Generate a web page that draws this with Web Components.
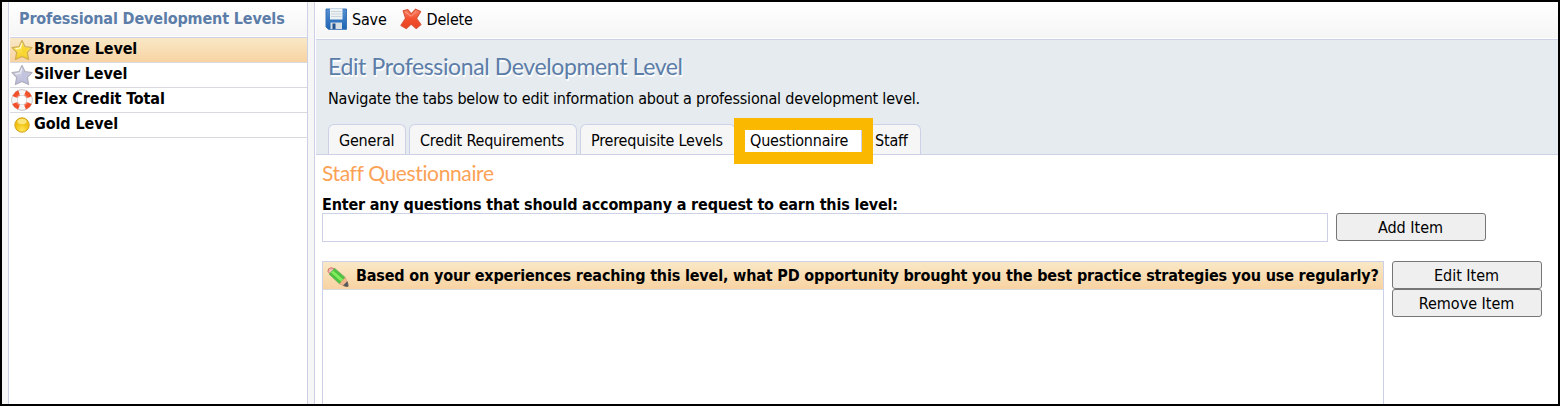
<!DOCTYPE html>
<html lang="en">
<head>
<meta charset="utf-8">
<title>Professional Development Levels</title>
<style>
  html, body {
    margin: 0;
    height: 406px;
    overflow: hidden;
  }

  body {
    font: 16px/20px Tahoma, "DejaVu Sans Condensed", "DejaVu Sans", sans-serif;
    color: #000;
    --line: #cdd1e8;
    --selected: linear-gradient(#f9e8c6, #f8d3a2);
    --bar: linear-gradient(#fff, #f5f5f5);
  }
</style>
</head>
<body>
<app-frame>
  <level-list slot="side" heading="Professional Development Levels">
    <level-item icon="gold-star" selected>Bronze Level</level-item>
    <level-item icon="silver-star">Silver Level</level-item>
    <level-item icon="ring">Flex Credit Total</level-item>
    <level-item icon="coin">Gold Level</level-item>
  </level-list>
  <tool-bar>
    <tool-button icon="save">Save</tool-button>
    <tool-button icon="delete">Delete</tool-button>
  </tool-bar>
  <page-header heading="Edit Professional Development Level">
    <span>Navigate the tabs below to edit information about a professional development level.</span>
    <page-tab slot="tabs" style="width:78px">General</page-tab>
    <page-tab slot="tabs" style="width:168px">Credit Requirements</page-tab>
    <page-tab slot="tabs" style="width:156px">Prerequisite Levels</page-tab>
    <page-tab slot="tabs" style="width:123px" active>Questionnaire</page-tab>
    <page-tab slot="tabs" style="width:57px;margin-left:-1px">Staff</page-tab>
  </page-header>
  <question-form></question-form>
</app-frame>

<script>
const icons = {
  'gold-star': `
    <svg width="22" height="22" viewBox="0 0 22 22">
      <defs><linearGradient id="g" x2="0" y2="1"><stop offset="0" stop-color="#fff2a0"/><stop offset=".5" stop-color="#fbe04a"/><stop offset="1" stop-color="#f5c81c"/></linearGradient></defs>
      <path d="M11 1.500l3 6.200 7 .9-4.700 4.800 1.300 7.100-6.600-3-6.600 3 1.300-7.100L1 8.600l7-.9z" fill="url(#g)" stroke="#cfae55" stroke-width="1.300" stroke-linejoin="round"/>
      <path d="M11 4l2.200 4.600 5 .8-3.500 3.300.9 5-4.600-2.200z" fill="#f9d632"/>
      <path d="M11 4.500L9 9l-4.500.8" fill="none" stroke="#fffbd0" stroke-width="1.200"/>
    </svg>`,
  'silver-star': `
    <svg width="22" height="22" viewBox="0 0 22 22">
      <defs><linearGradient id="g" x2="0" y2="1"><stop offset="0" stop-color="#dedee8"/><stop offset=".5" stop-color="#cbccde"/><stop offset="1" stop-color="#b5b7da"/></linearGradient></defs>
      <path d="M11 1.500l3 6.200 7 .9-4.700 4.800 1.300 7.100-6.600-3-6.600 3 1.300-7.100L1 8.600l7-.9z" fill="url(#g)" stroke="#b0b0be" stroke-width="1.300" stroke-linejoin="round"/>
      <path d="M11 4l2.200 4.600 5 .8-3.500 3.300.9 5-4.600-2.200z" fill="#c1c3df"/>
      <path d="M11 4.500L9 9l-4.500.8" fill="none" stroke="#efeff6" stroke-width="1.200"/>
    </svg>`,
  'ring': `
    <svg width="22" height="22" viewBox="0 0 22 22">
      <circle cx="11" cy="11" r="7.600" fill="none" stroke="#bdbdbd" stroke-width="6.200"/>
      <circle cx="11" cy="11" r="7.500" fill="none" stroke="#f4f4f4" stroke-width="5.200"/>
      <circle cx="11" cy="11" r="7.800" fill="none" stroke="#f2502b" stroke-width="5.200" stroke-dasharray="6.130 6.122" transform="rotate(22 11 11)"/>
      <circle cx="11" cy="11" r="6" fill="none" stroke="#fff" stroke-opacity=".3" stroke-width="1"/>
    </svg>`,
  'coin': `
    <svg width="22" height="22" viewBox="0 0 22 22">
      <defs><radialGradient id="g" cx=".5" cy=".85" r=".8"><stop offset="0" stop-color="#ffe65a"/><stop offset=".55" stop-color="#f3c416"/><stop offset="1" stop-color="#e8b80c"/></radialGradient></defs>
      <circle cx="11" cy="11" r="7.200" fill="url(#g)" stroke="#d6a41a" stroke-width="1"/>
      <ellipse cx="11" cy="7.500" rx="4.600" ry="2.700" fill="#fff3a0" opacity=".75"/>
    </svg>`,
  'save': `
    <svg width="22" height="22" viewBox="0 0 22 22">
      <defs><linearGradient id="g" x2="0" y2="1"><stop offset="0" stop-color="#5590d0"/><stop offset="1" stop-color="#1c62b4"/></linearGradient></defs>
      <path d="M1 1h20.500v20.300H3.500L1 19z" fill="url(#g)" stroke="#3a74b8" stroke-width="1" stroke-linejoin="round"/>
      <path d="M5 .500h12.500v11H5z" fill="#edf2f5"/>
      <path d="M6 3.500h10.500M6 6h10.500M6 8.500h10.500" stroke="#cbd5dc" stroke-width="1"/>
      <path d="M5.500 14.500h11.500v6.500H5.500z" fill="#d9dee2"/>
      <path d="M7.500 15.500h3v5.500h-3z" fill="#23548f"/>
    </svg>`,
  'delete': `
    <svg width="22" height="22" viewBox="0 0 22 22">
      <defs><linearGradient id="g" x2="0" y2="1"><stop offset="0" stop-color="#f98468"/><stop offset=".5" stop-color="#f4502e"/><stop offset="1" stop-color="#e8421f"/></linearGradient></defs>
      <path d="M3.200 2.800L7.800 1.700l3.500 4.100L15.600 1.200l5 2.400-4.200 6.800 4.500 6.200-4.700 3.900-5-4.500-5 4.600L1 17.400l4.600-7z" fill="url(#g)" stroke="#dc5538" stroke-width="1.200" stroke-linejoin="round"/>
      <path d="M5 3.800l6.200 4.500 5-5" fill="none" stroke="#fba48e" stroke-width="1"/>
    </svg>`,
  'pencil': `
    <svg width="22" height="22" viewBox="0 0 22 22">
      <path d="M3.500 8.500Q-.5 5 1.500 3 3.800.300 8 3.300z" fill="#ecc0b4" stroke="#d66a5e" stroke-width="1" stroke-linejoin="round"/>
      <path d="M2.200 8.200L7.600 2.300l10.600 9.200-5.600 6.400z" fill="#4fc23f" stroke="#6db063" stroke-width=".8"/>
      <path d="M5 5.500l10.800 9.700" stroke="#80ec5e" stroke-width="3"/>
      <path d="M12.600 17.900l5.600-6.400q2.500 4 2.800 8.700-4.500 0-8.400-2.300z" fill="#f2b88c" stroke="#d59a78" stroke-width=".6"/>
      <path d="M16.500 19.400l3.700-3.700q1 2.300.8 4.700-2.500.2-4.500-1z" fill="#555" stroke="#666" stroke-width="1" stroke-linejoin="round"/>
    </svg>`
};

class AppFrame extends HTMLElement {
  constructor() {
    super();
    this.attachShadow({ mode: 'open' });
    this.shadowRoot.innerHTML = `
      <style>
        :host {
          display: grid;
          grid-template-columns: 300px 1fr;
          gap: 6px;
          box-sizing: border-box;
          width: 1560px;
          height: 406px;
          padding-left: 6px;
          border: 2px solid #000;
          background: #f6f6f6;
          overflow: hidden;
        }

        aside, main {
          box-sizing: border-box;
          min-width: 0;
          padding-left: 1px;
          border-left: 1px solid var(--line);
          background: #fff;
        }

        aside {
          border-right: 1px solid var(--line);
        }
      </style>
      <aside><slot name="side"></slot></aside>
      <main><slot></slot></main>
    `;
  }
}

class LevelList extends HTMLElement {
  constructor() {
    super();
    this.attachShadow({ mode: 'open' });
    this.shadowRoot.innerHTML = `
      <style>
        :host {
          display: block;
        }

        h3 {
          box-sizing: border-box;
          height: 36px;
          margin: 0;
          padding: 7px 0 0 9px;
          border-bottom: 1px solid var(--line);
          background: var(--bar);
          box-shadow: inset 0 -1px #fff;
          color: #5c7da8;
          font-size: 16px;
          letter-spacing: -0.14px;
          line-height: 20px;
          white-space: nowrap;
        }
      </style>
      <h3>${this.getAttribute('heading')}</h3>
      <slot></slot>
    `;
  }
}

class LevelItem extends HTMLElement {
  constructor() {
    super();
    this.attachShadow({ mode: 'open' });
    this.shadowRoot.innerHTML = `
      <style>
        :host {
          display: flex;
          gap: 1px;
          box-sizing: border-box;
          height: 25px;
          padding-left: 1px;
          border-bottom: 1px solid #d9d9e0;
          font-weight: bold;
          letter-spacing: -0.1px;
          line-height: 22px;
        }

        :host([selected]) {
          background: var(--selected);
        }

        svg {
          flex: none;
          margin-top: 1px;
        }
      </style>
      ${icons[this.getAttribute('icon')]}
      <slot></slot>
    `;
  }
}

class ToolBar extends HTMLElement {
  constructor() {
    super();
    this.attachShadow({ mode: 'open' });
    this.shadowRoot.innerHTML = `
      <style>
        :host {
          display: flex;
          gap: 13px;
          box-sizing: border-box;
          height: 38px;
          padding: 6px 0 0 9px;
          border-bottom: 1px solid var(--line);
          background: var(--bar);
          box-shadow: inset 0 -1px #fff;
        }
      </style>
      <slot></slot>
    `;
  }
}

class ToolButton extends HTMLElement {
  constructor() {
    super();
    this.attachShadow({ mode: 'open' });
    this.shadowRoot.innerHTML = `
      <style>
        :host {
          display: flex;
          gap: 5px;
          height: 22px;
          letter-spacing: -0.2px;
          line-height: 23px;
        }
      </style>
      ${icons[this.getAttribute('icon')]}
      <slot></slot>
    `;
  }
}

class PageHeader extends HTMLElement {
  constructor() {
    super();
    this.attachShadow({ mode: 'open' });
    this.shadowRoot.innerHTML = `
      <style>
        :host {
          display: flex;
          flex-direction: column;
          box-sizing: border-box;
          height: 115px;
          padding: 12px 0 0 12px;
          border-bottom: 1px solid var(--line);
          background: #e5ebef;
          letter-spacing: -0.2px;
          white-space: nowrap;
        }

        h1 {
          margin: 0;
          color: #5c7da8;
          font: 23px/28px "Gill Sans", Lato, sans-serif;
          letter-spacing: -0.37px;
          text-shadow: 1px 2px #fff;
        }

        p {
          margin: 9px 0 0;
          line-height: 20px;
        }

        nav {
          display: flex;
          gap: 3px;
          margin-top: 15px;
        }
      </style>
      <h1>${this.getAttribute('heading')}</h1>
      <p><slot></slot></p>
      <nav><slot name="tabs"></slot></nav>
    `;
  }
}

class PageTab extends HTMLElement {
  constructor() {
    super();
    this.attachShadow({ mode: 'open' });
    this.shadowRoot.innerHTML = `
      <style>
        :host {
          display: block;
          position: relative;
          box-sizing: border-box;
          height: 30px;
          padding: 6px 0 0 10px;
          border: 1px solid var(--line);
          border-bottom: 0;
          border-radius: 6px 6px 0 0;
          background: #f6f6f6;
        }

        :host([active]) {
          height: 31px;
          margin-bottom: -1px;
          background: #fff;
        }

        /* callout frame over the active tab */
        :host([active])::after {
          content: "";
          position: absolute;
          z-index: 1;
          left: -6px;
          top: -7px;
          width: 117px;
          height: 22px;
          border: solid #fbb800;
          border-width: 12px 11px;
        }
      </style>
      <slot></slot>
    `;
  }
}

class PushButton extends HTMLElement {
  constructor() {
    super();
    this.attachShadow({ mode: 'open' });
    this.shadowRoot.innerHTML = `
      <style>
        :host {
          display: block;
        }

        button {
          display: block;
          box-sizing: border-box;
          width: 150px;
          height: 28px;
          padding: 1px 1px 0 0;
          border: 1px solid #767676;
          border-radius: 3px;
          background: #efefef;
          color: #000;
          font: inherit;
        }
      </style>
      <button><slot></slot></button>
    `;
  }
}

class QuestionForm extends HTMLElement {
  constructor() {
    super();
    this.attachShadow({ mode: 'open' });
    this.shadowRoot.innerHTML = `
      <style>
        :host {
          display: block;
          padding: 6px 0 0 6px;
          white-space: nowrap;
        }

        h2 {
          margin: 0;
          color: #fca257;
          font: 21px/24px "Gill Sans", Lato, sans-serif;
          letter-spacing: -0.37px;
        }

        label {
          display: block;
          margin-top: 11px;
          font-weight: bold;
          letter-spacing: -0.17px;
          line-height: 17px;
        }

        .row {
          display: flex;
          gap: 8px;
        }

        input {
          box-sizing: border-box;
          width: 1006px;
          height: 29px;
          border: 1px solid var(--line);
          background: #fff;
        }

        .items {
          margin-top: 19px;
        }

        .list {
          box-sizing: border-box;
          width: 1062px;
          height: 220px;
          border: 1px solid var(--line);
        }

        .item {
          display: flex;
          gap: 7px;
          box-sizing: border-box;
          height: 28px;
          padding: 4px 0 0 4px;
          border-bottom: 1px solid #d9d9e0;
          background: var(--selected);
          font-weight: bold;
          letter-spacing: -0.167px;
        }

        svg {
          flex: none;
        }
      </style>
      <h2>Staff Questionnaire</h2>
      <label for="question">Enter any questions that should accompany a request to earn this level:</label>
      <div class="row">
        <input id="question" type="text">
        <push-button>Add Item</push-button>
      </div>
      <div class="row items">
        <div class="list">
          <div class="item">${icons.pencil}<span>Based on your experiences reaching this level, what PD opportunity brought you the best practice strategies you use regularly?</span></div>
        </div>
        <div>
          <push-button>Edit Item</push-button>
          <push-button>Remove Item</push-button>
        </div>
      </div>
    `;
  }
}

customElements.define('app-frame', AppFrame);
customElements.define('level-list', LevelList);
customElements.define('level-item', LevelItem);
customElements.define('tool-bar', ToolBar);
customElements.define('tool-button', ToolButton);
customElements.define('page-header', PageHeader);
customElements.define('page-tab', PageTab);
customElements.define('push-button', PushButton);
customElements.define('question-form', QuestionForm);
</script>
</body>
</html>
